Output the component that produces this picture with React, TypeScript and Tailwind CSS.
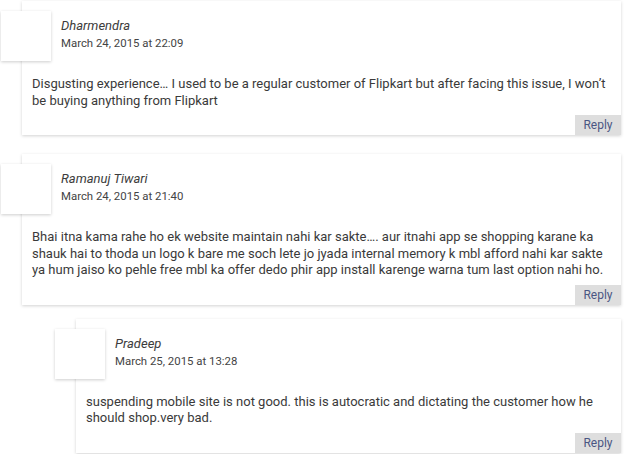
import { FC } from 'react'

type Comment = {
  author: string
  date: string
  body: string
  nested?: boolean
}

const COMMENTS: Comment[] = [
  {
    author: 'Dharmendra',
    date: 'March 24, 2015 at 22:09',
    body: 'Disgusting experience… I used to be a regular customer of Flipkart but after facing this issue, I won’t be buying anything from Flipkart',
  },
  {
    author: 'Ramanuj Tiwari',
    date: 'March 24, 2015 at 21:40',
    body: 'Bhai itna kama rahe ho ek website maintain nahi kar sakte…. aur itnahi app se shopping karane ka shauk hai to thoda un logo k bare me soch lete jo jyada internal memory k mbl afford nahi kar sakte ya hum jaiso ko pehle free mbl ka offer dedo phir app install karenge warna tum last option nahi ho.',
  },
  {
    author: 'Pradeep',
    date: 'March 25, 2015 at 13:28',
    body: 'suspending mobile site is not good. this is autocratic and dictating the customer how he should shop.very bad.',
    nested: true,
  },
]

const CommentCard: FC<{ comment: Comment }> = ({ comment }) => (
  <div
    className={`relative bg-white mr-[4px] shadow-[0_1px_3px_rgba(0,0,0,0.18)] ${
      comment.nested ? 'ml-[76px]' : 'ml-[22px]'
    }`}
  >
    {/* Avatar placeholder hanging over the left edge */}
    <div className="absolute -left-[21px] top-[10px] w-[50px] h-[50px] bg-white shadow-[0_1px_3px_rgba(0,0,0,0.2)]" />

    <div className="pl-[39px] pt-[17px]">
      <div className="italic text-[13px] leading-4 text-[#3c3c3c]">{comment.author}</div>
      <div className="mt-px text-[11.4px] leading-4 text-[#444]">{comment.date}</div>
    </div>

    <p className="mt-[25px] px-[10px] text-[13px] leading-[16.5px] text-[#3a3a3a]">
      {comment.body}
    </p>

    <div className="flex justify-end mt-[6px]">
      <button className="w-[46px] h-[20px] bg-[#dedede] text-[12px] text-[#4a5683]">Reply</button>
    </div>
  </div>
)

export default function App() {
  return (
    <div className="w-[625px] h-[454px] bg-white overflow-hidden pt-px font-['Roboto',sans-serif]">
      <div className="flex flex-col">
        <CommentCard comment={COMMENTS[0]} />
        <div className="h-[19px]" />
        <CommentCard comment={COMMENTS[1]} />
        <div className="h-[14px]" />
        <CommentCard comment={COMMENTS[2]} />
      </div>
    </div>
  )
}
